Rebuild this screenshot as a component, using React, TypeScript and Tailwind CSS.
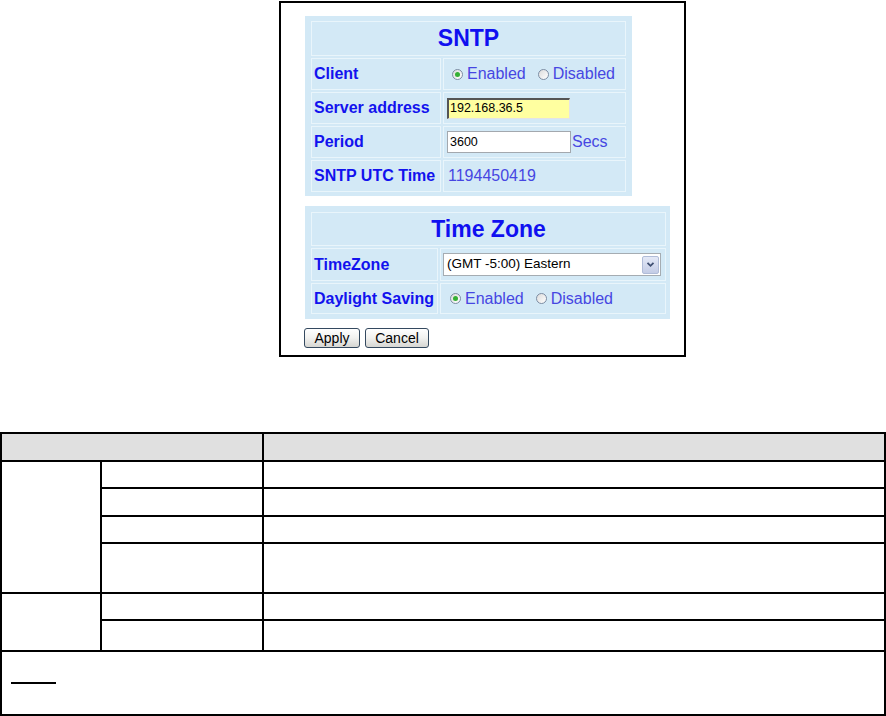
import React from "react";

const cell = "bg-[#d3e9f6] border border-[#e9f5fb]";
const label = `${cell} flex items-center pl-[2px] text-[16px] font-bold text-[#1212ee]`;
const value = `${cell} flex items-center text-[16px] text-[#4646e2]`;

function Radio({ checked, text, gap }: { checked?: boolean; text: string; gap: string }) {
  return (
    <span className={`inline-flex items-center ${gap}`}>
      <span className="flex h-[11px] w-[11px] items-center justify-center rounded-full border border-[#7d8da3] bg-linear-to-br from-[#dcdcdc] to-white">
        {checked && <span className="h-[5px] w-[5px] rounded-full bg-[#35b035]" />}
      </span>
      <span className="ml-[4px]">{text}</span>
    </span>
  );
}

function XpButton({ children, w }: { children: React.ReactNode; w: string }) {
  return (
    <button
      className={`${w} h-[20px] rounded-[3px] border border-[#34495f] bg-linear-to-b from-white via-[#f1f1ef] to-[#d6d6d2] text-[14px] leading-none text-black`}
    >
      {children}
    </button>
  );
}

function ConfigShot() {
  return (
    <div className="ml-[279px] mt-[1px] h-[356px] w-[407px] border-2 border-black bg-white pl-[24px] pt-[13px]">
      {/* SNTP */}
      <div className="w-[327px] bg-[#d3e9f6] pb-[4px] pl-[6px] pr-[6px] pt-[5px]">
        <div className="grid grid-cols-[130px_183px] gap-[2px]">
          <div className={`${cell} col-span-2 flex h-[35px] items-center justify-center text-[23px] font-bold text-[#1010f0]`}>
            SNTP
          </div>
          <div className={`${label} h-[32px]`}>Client</div>
          <div className={`${value} h-[32px] pl-[8px]`}>
            <Radio checked text="Enabled" gap="" />
            <Radio text="Disabled" gap="ml-[12px]" />
          </div>
          <div className={`${label} h-[32px]`}>Server address</div>
          <div className={`${value} h-[32px] pl-[3px]`}>
            <div className="flex h-[21px] w-[123px] items-center border-b border-l-2 border-r border-t-2 border-b-[#e4e4e4] border-l-[#555] border-r-[#e4e4e4] border-t-[#555] bg-[#ffffa0] pl-[1px] text-[12.5px] text-black">
              192.168.36.5
            </div>
          </div>
          <div className={`${label} h-[32px]`}>Period</div>
          <div className={`${value} h-[32px] pl-[3px]`}>
            <div className="flex h-[22px] w-[124px] items-center border border-[#a3a8ae] bg-white pl-[2px] text-[12.5px] text-black">
              3600
            </div>
            <span className="ml-[1px]">Secs</span>
          </div>
          <div className={`${label} h-[32px]`}>SNTP UTC Time</div>
          <div className={`${value} h-[32px] pl-[4px]`}>1194450419</div>
        </div>
      </div>

      {/* Time Zone */}
      <div className="mt-[10px] w-[365px] bg-[#d3e9f6] pb-[5px] pl-[6px] pr-[4px] pt-[6px]">
        <div className="grid grid-cols-[127px_226px] gap-[2px]">
          <div className={`${cell} col-span-2 flex h-[34px] items-center justify-center text-[23px] font-bold text-[#1010f0]`}>
            Time Zone
          </div>
          <div className={`${label} h-[33px]`}>TimeZone</div>
          <div className={`${value} h-[33px] pl-[2px]`}>
            <div className="flex h-[23px] w-[218px] items-center border border-[#a5acb2] bg-white pl-[3px] pr-[1px] text-[13.5px] text-black">
              <span className="flex-1">(GMT -5:00) Eastern</span>
              <span className="flex h-[18px] w-[17px] items-center justify-center rounded-[2px] border border-[#b0bcd8] bg-linear-to-b from-[#e4e9f7] to-[#c3cce6]">
                <svg width="9" height="7" viewBox="0 0 9 7">
                  <path d="M1.5 1.8 L4.5 4.8 L7.5 1.8" fill="none" stroke="#3f4f72" strokeWidth="1.8" />
                </svg>
              </span>
            </div>
          </div>
          <div className={`${label} h-[31px]`}>Daylight Saving</div>
          <div className={`${value} h-[31px] pl-[9px]`}>
            <Radio checked text="Enabled" gap="" />
            <Radio text="Disabled" gap="ml-[12px]" />
          </div>
        </div>
      </div>

      <div className="mt-[9px] flex gap-[5px] pl-[-1px]">
        <div className="-ml-[1px] flex gap-[5px]">
          <XpButton w="w-[56px]">Apply</XpButton>
          <XpButton w="w-[64px]">Cancel</XpButton>
        </div>
      </div>
    </div>
  );
}

function ParamTable() {
  const c = "bg-white";
  return (
    <div className="mt-[75px] grid grid-cols-[98px_160px_1fr] grid-rows-[26px_25px_26px_25px_48px_25px_29px_62px] gap-[2px] border-2 border-black bg-black">
      <div className="col-span-2 bg-[#e0e0e0]" />
      <div className="bg-[#e0e0e0]" />
      <div className={`${c} row-span-4`} />
      <div className={c} />
      <div className={c} />
      <div className={c} />
      <div className={c} />
      <div className={c} />
      <div className={c} />
      <div className={c} />
      <div className={c} />
      <div className={`${c} row-span-2`} />
      <div className={c} />
      <div className={c} />
      <div className={c} />
      <div className={c} />
      <div className={`${c} col-span-3 pl-[9px] pt-[30px]`}>
        <div className="h-[2px] w-[45px] bg-black" />
      </div>
    </div>
  );
}

export default function App() {
  return (
    <div className="h-[716px] w-[886px] overflow-hidden bg-white font-['Liberation_Sans',Arial,sans-serif]">
      <ConfigShot />
      <ParamTable />
    </div>
  );
}
